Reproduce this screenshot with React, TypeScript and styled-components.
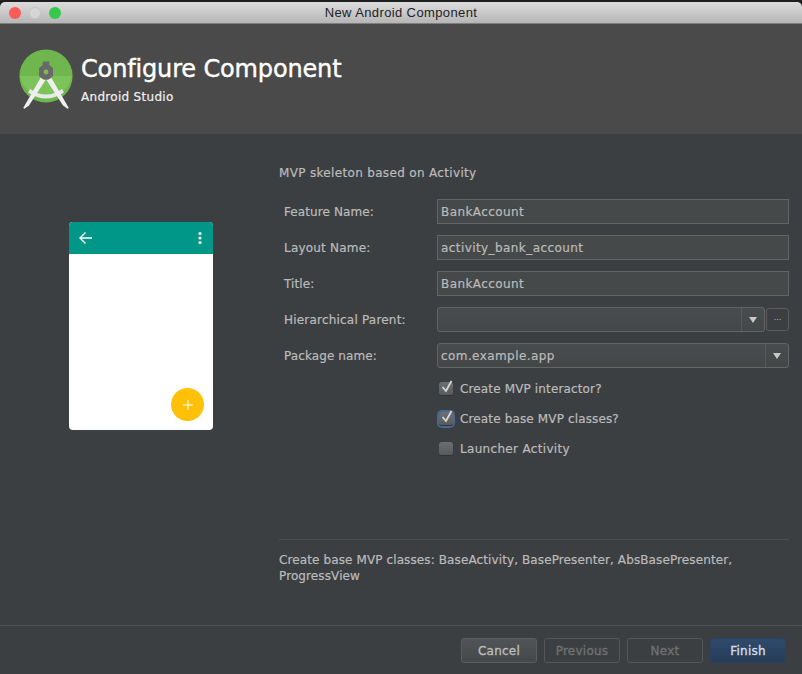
import React from 'react'
import styled, {createGlobalStyle} from 'styled-components'

const GlobalStyle = createGlobalStyle`
  html, body {
    margin: 0;
    padding: 0;
    background: #1e1e1e;
  }
  body {
    font-family: "DejaVu Sans", "Liberation Sans", sans-serif;
  }
`

const Window = styled.div`
  width: 802px;
  height: 674px;
  padding-top: 2px;
  box-sizing: border-box;
  display: flex;
  flex-direction: column;
  overflow: hidden;
  -webkit-text-stroke: 0.2px;
`

const TitleBar = styled.div`
  position: relative;
  height: 22px;
  flex: none;
  display: flex;
  align-items: center;
  justify-content: center;
  background: linear-gradient(#dcdcdc, #b6b6b6);
  border-radius: 5px 5px 0 0;
  border-bottom: 1px solid #7e7e7e;
  box-sizing: border-box;
  font-family: "Liberation Sans", sans-serif;
  font-size: 13px;
  letter-spacing: 0.38px;
  color: #222;
  -webkit-text-stroke: 0;
`

const Lights = styled.div`
  position: absolute;
  left: 9px;
  top: 5px;
  display: flex;
  gap: 8px;
`

const Light = styled.span<{$color: string; $dim?: boolean}>`
  width: 12px;
  height: 12px;
  box-sizing: border-box;
  border-radius: 50%;
  background: ${p => p.$color};
  border: ${p => (p.$dim ? '1px solid #c6c6c6' : 'none')};
`

const Header = styled.div`
  height: 110px;
  flex: none;
  display: flex;
  align-items: flex-start;
  padding: 25px 0 0 19px;
  box-sizing: border-box;
  background: #4a4a4a;
  gap: 8px;
`

const HeaderText = styled.div`
  display: flex;
  flex-direction: column;
`

const HeaderTitle = styled.div`
  font-size: 24px;
  line-height: 30px;
  color: #fff;
  margin-top: 5px;
  letter-spacing: -0.15px;
  -webkit-text-stroke: 0.4px;
`

const HeaderSub = styled.div`
  font-size: 12px;
  line-height: 16px;
  color: #f0f0f0;
  margin-top: 5px;
  letter-spacing: 0.3px;
`

const Body = styled.div`
  flex: 1;
  display: flex;
  background: #3c3f41;
`

const PreviewColumn = styled.div`
  width: 279px;
  flex: none;
  padding: 88px 0 0 69px;
  box-sizing: border-box;
`

const Phone = styled.div`
  position: relative;
  width: 144px;
  height: 208px;
  background: #fff;
  border-radius: 4px;
  overflow: hidden;
  -webkit-text-stroke: 0;
`

const AppBar = styled.div`
  height: 32px;
  background: #009688;
  display: flex;
  align-items: center;
  justify-content: space-between;
  padding: 0 10px 0 9px;
`

const Fab = styled.div`
  position: absolute;
  right: 9px;
  bottom: 9px;
  width: 33px;
  height: 33px;
  border-radius: 50%;
  background: #ffc107;
  display: flex;
  align-items: center;
  justify-content: center;
`

const FormColumn = styled.div`
  flex: 1;
  display: flex;
  flex-direction: column;
  padding: 31px 13px 0 0;
  color: #bbbbbb;
  font-size: 12px;
`

const Heading = styled.div`
  line-height: 16px;
  margin-bottom: 18px;
  letter-spacing: 0.33px;
`

const Fields = styled.div`
  display: grid;
  grid-template-columns: 153px 1fr;
  row-gap: 11px;
  padding-left: 5px;
  align-items: center;
`

const FieldLabel = styled.label<{$spacing?: number}>`
  line-height: 16px;
  letter-spacing: ${p => p.$spacing ?? 0.1}px;
`

const Input = styled.div`
  height: 25px;
  box-sizing: border-box;
  border: 1px solid #646464;
  background: #45494a;
  padding-left: 3px;
  line-height: 25px;
  letter-spacing: 0.42px;
  color: #bbbbbb;
`

const ComboRow = styled.div`
  display: flex;
  align-items: center;
  gap: 1px;
`

const Combo = styled.div`
  flex: 1;
  height: 25px;
  box-sizing: border-box;
  display: flex;
  border: 1px solid #646464;
  border-radius: 3px;
  background: linear-gradient(#484c4e, #434748);
`

const ComboValue = styled.div`
  flex: 1;
  padding-left: 3px;
  line-height: 24px;
  letter-spacing: 0.42px;
  color: #bbbbbb;
`

const ComboArrow = styled.div`
  width: 22px;
  flex: none;
  border-left: 1px solid #5a5a5a;
  display: flex;
  align-items: center;
  justify-content: center;
`

const Triangle = styled.span`
  width: 0;
  height: 0;
  border-left: 4px solid transparent;
  border-right: 4px solid transparent;
  border-top: 6px solid #c8c8c8;
`

const BrowseButton = styled.div`
  width: 23px;
  height: 23px;
  flex: none;
  box-sizing: border-box;
  border: 1px solid #5c5c5c;
  border-radius: 3px;
  display: flex;
  align-items: center;
  justify-content: center;
  padding-bottom: 4px;
  font-size: 8px;
  line-height: 12px;
  color: #bbbbbb;
  -webkit-text-stroke: 0;
`

const Checks = styled.div`
  display: flex;
  flex-direction: column;
  gap: 14px;
  padding: 13px 0 0 160px;
`

const CheckRow = styled.div<{$spacing?: number}>`
  display: flex;
  align-items: center;
  gap: 7px;
  height: 16px;
  line-height: 16px;
  letter-spacing: ${p => p.$spacing ?? 0.14}px;
`

const CheckBox = styled.span<{$focused?: boolean}>`
  position: relative;
  width: 14px;
  height: 14px;
  box-sizing: border-box;
  border-radius: 3px;
  background: linear-gradient(#6c6e70, #585a5c);
  border-bottom: 1px solid #2f3133;
  box-shadow: ${p => (p.$focused ? '0 0 0 2px #46698f' : 'none')};
`

const CheckMark = styled.svg`
  position: absolute;
  left: 1px;
  top: -3px;
`

const Spacer = styled.div`
  flex: 1;
`

const Description = styled.div`
  border-top: 1px solid #4b4e50;
  padding-top: 12px;
  height: 86px;
  box-sizing: border-box;
  line-height: 16px;
  letter-spacing: 0.11px;
  color: #bbbbbb;
`

const Footer = styled.div`
  height: 49px;
  flex: none;
  display: flex;
  justify-content: flex-end;
  gap: 7px;
  padding: 12px 16px 0 0;
  box-sizing: border-box;
  background: #3c3f41;
  border-top: 1px solid #505354;
`

const Button = styled.div<{$kind?: 'default' | 'disabled' | 'primary'}>`
  width: 76px;
  height: 25px;
  box-sizing: border-box;
  border-radius: 3px;
  display: flex;
  align-items: center;
  justify-content: center;
  font-size: 12px;
  letter-spacing: 0.25px;
  -webkit-text-stroke: 0.35px;
  border: 1px solid ${p => (p.$kind === 'primary' ? '#2d4260' : p.$kind === 'disabled' ? '#545658' : '#5b5e60')};
  color: ${p => (p.$kind === 'disabled' ? '#6f7173' : p.$kind === 'primary' ? '#d6dce2' : '#bbbbbb')};
  background: ${p =>
    p.$kind === 'primary'
      ? 'linear-gradient(#2f4a6c, #263c58)'
      : p.$kind === 'disabled'
        ? 'transparent'
        : 'linear-gradient(#505456, #454849)'};
`

const StudioLogo = () => (
  <svg width="54" height="62" viewBox="0 0 54 62">
    <circle cx="27" cy="27" r="26.6" fill="#6fb64e" />
    <path d="M0.9 27 H53.1 A26.6 26.6 0 0 1 0.9 27 Z" fill="#7cc35a" />
    <path d="M11 40 Q27 51 43 40 L45 43.5 Q27 55.5 9 43.5 Z" fill="#e8e8e8" />
    <path d="M21.5 29 L4.5 58.5 L5 60 L10 56.5 L26.5 31 Z" fill="#efefef" />
    <path d="M32.5 29 L49.5 58.5 L49 60 L44 56.5 L27.5 31 Z" fill="#efefef" />
    <path d="M23.7 12.5 H30.3 V16 L34 19 V27 L29.5 30.5 H24.5 L20 27 V19 L23.7 16 Z" fill="#696969" />
    <circle cx="27" cy="23" r="2.4" fill="#78bd57" />
  </svg>
)

const Check = () => (
  <CheckMark width="14" height="15" viewBox="0 0 14 15" fill="none" stroke="#d8d8d8" strokeWidth="1.8">
    <path d="M2.5 8 L6 12 L11.5 2" />
  </CheckMark>
)

const App = () => (
  <Window>
    <GlobalStyle />
    <TitleBar>
      <Lights>
        <Light $color="#fc5b57" />
        <Light $color="#d6d6d6" $dim />
        <Light $color="#35c84a" />
      </Lights>
      New Android Component
    </TitleBar>
    <Header>
      <StudioLogo />
      <HeaderText>
        <HeaderTitle>Configure Component</HeaderTitle>
        <HeaderSub>Android Studio</HeaderSub>
      </HeaderText>
    </Header>
    <Body>
      <PreviewColumn>
        <Phone>
          <AppBar>
            <svg width="14" height="14" viewBox="0 0 14 14" fill="none" stroke="#fff" strokeWidth="1.4">
              <path d="M14 7 H2 M7.5 1.5 L2 7 L7.5 12.5" />
            </svg>
            <svg width="6" height="14" viewBox="0 0 6 14" fill="#fff">
              <circle cx="3" cy="2.5" r="1.6" />
              <circle cx="3" cy="7" r="1.6" />
              <circle cx="3" cy="11.5" r="1.6" />
            </svg>
          </AppBar>
          <Fab>
            <svg width="10" height="10" viewBox="0 0 10 10" stroke="#fff" strokeWidth="1">
              <path d="M5 0 V10 M0 5 H10" />
            </svg>
          </Fab>
        </Phone>
      </PreviewColumn>
      <FormColumn>
        <Heading>MVP skeleton based on Activity</Heading>
        <Fields>
          <FieldLabel>Feature Name:</FieldLabel>
          <Input>BankAccount</Input>
          <FieldLabel $spacing={0.2}>Layout Name:</FieldLabel>
          <Input>activity_bank_account</Input>
          <FieldLabel>Title:</FieldLabel>
          <Input>BankAccount</Input>
          <FieldLabel $spacing={0.2}>Hierarchical Parent:</FieldLabel>
          <ComboRow>
            <Combo>
              <ComboValue />
              <ComboArrow>
                <Triangle />
              </ComboArrow>
            </Combo>
            <BrowseButton>...</BrowseButton>
          </ComboRow>
          <FieldLabel>Package name:</FieldLabel>
          <Combo>
            <ComboValue>com.example.app</ComboValue>
            <ComboArrow>
              <Triangle />
            </ComboArrow>
          </Combo>
        </Fields>
        <Checks>
          <CheckRow>
            <CheckBox>
              <Check />
            </CheckBox>
            Create MVP interactor?
          </CheckRow>
          <CheckRow>
            <CheckBox $focused>
              <Check />
            </CheckBox>
            Create base MVP classes?
          </CheckRow>
          <CheckRow $spacing={0.32}>
            <CheckBox />
            Launcher Activity
          </CheckRow>
        </Checks>
        <Spacer />
        <Description>
          Create base MVP classes: BaseActivity, BasePresenter, AbsBasePresenter,
          <br />
          ProgressView
        </Description>
      </FormColumn>
    </Body>
    <Footer>
      <Button>Cancel</Button>
      <Button $kind="disabled">Previous</Button>
      <Button $kind="disabled">Next</Button>
      <Button $kind="primary">Finish</Button>
    </Footer>
  </Window>
)

export default App
